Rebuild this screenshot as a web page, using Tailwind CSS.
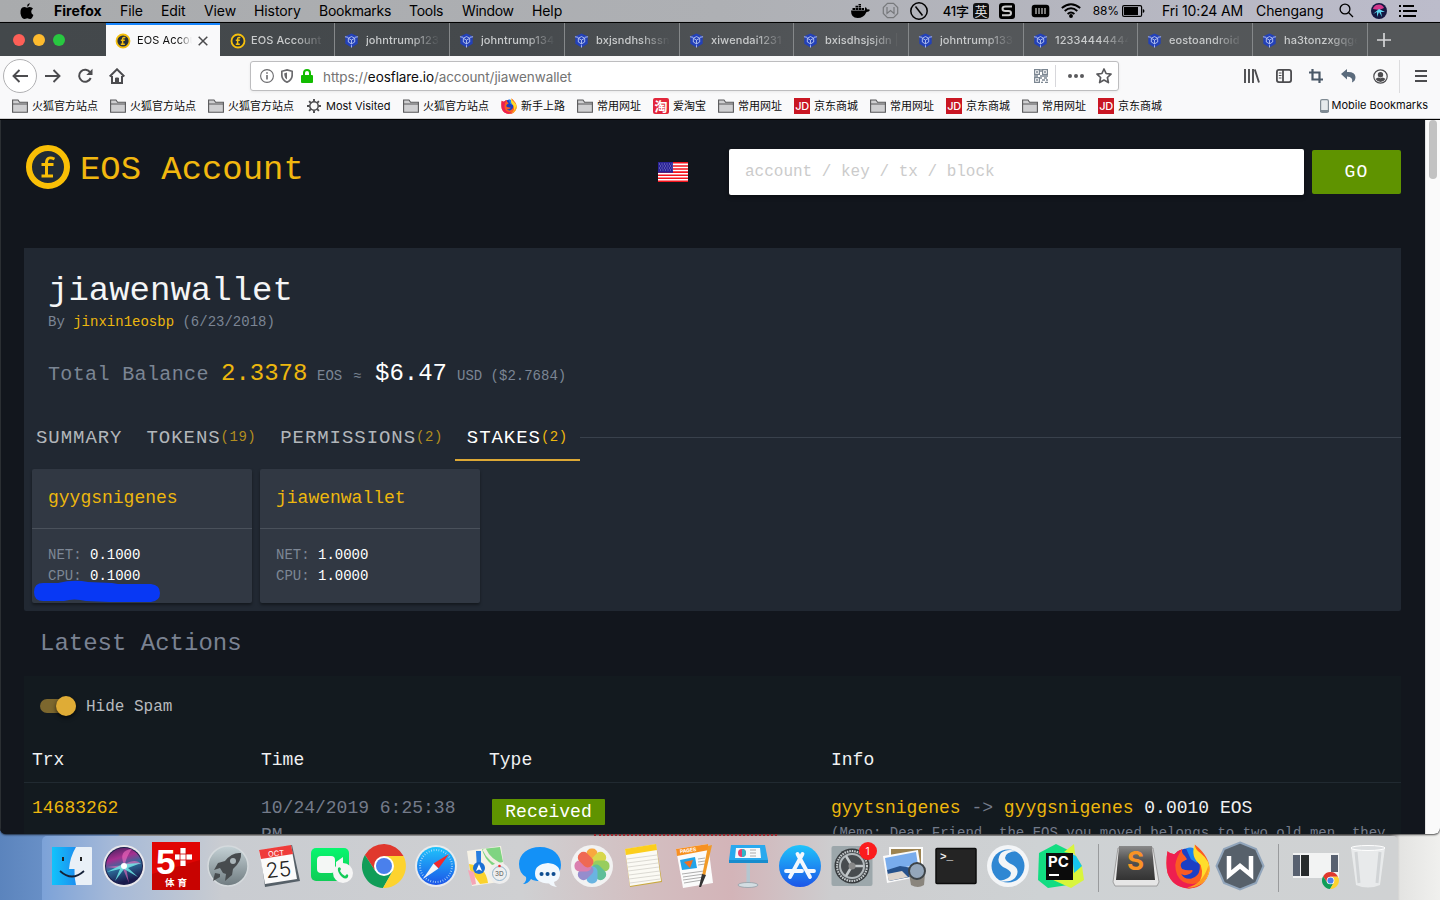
<!DOCTYPE html>
<html lang="en">
<head>
<meta charset="utf-8">
<title>EOS Account</title>
<script src="https://cdn.jsdelivr.net/npm/@tailwindcss/browser@4"></script>
</head>
<body class="w-[1440px] h-[900px] overflow-hidden relative bg-[linear-gradient(90deg,#5b84bd_0,#7fa3d6_118px,#a9a9a9_120px,#a9a9a9_594px,#9a9a9a_780px,#8d8d8d_1390px,#e4e4e2_1400px,#f0f0ee_1440px)] font-['Inter','Noto_Sans_CJK_SC',sans-serif] text-black">

<svg width="0" height="0" class="absolute">
  <defs>
    <symbol id="cube" viewBox="0 0 16 16"><path d="M8 .5 14.6 3.5V11.5L8 15.5 1.4 11.5V3.5Z" fill="#2341b8"/><path d="M1 4 4.5 4.6M15 4 11.5 4.6M8 13V15.5M8 3.8 11.4 5.6V9.6L8 11.6 4.6 9.6V5.6ZM4.6 5.6 8 7.6 11.4 5.6M8 7.6V11.6" fill="none" stroke="#c3cdf5" stroke-width=".9"/></symbol>
    <symbol id="flare" viewBox="0 0 16 16"><circle cx="8" cy="8" r="6.5" fill="#27303a" stroke="#f5bf0d" stroke-width="1.8"/><path d="M10.3 4.8C8.6 4 7.6 4.8 7.6 6.2V11.2M5.8 7.3H9.8M5.8 11.2H9.8" fill="none" stroke="#f5bf0d" stroke-width="1.5"/></symbol>
    <symbol id="folder" viewBox="0 0 16 14"><path d="M.6 13.200V1H6L7.600 3.200H15.400V13.200Z" fill="#cfcfd1" stroke="#58585a" stroke-width="1.100"/><path d="M.6 5H15.400" stroke="#58585a" stroke-width="1"/></symbol>
    <symbol id="chrome" viewBox="0 0 44 44"><path d="M22 12H41.500A22 22 0 0 0 2.900 11L13.300 27Z" fill="#e0382d"/><path d="M13.300 27 2.900 11A22 22 0 0 0 21 44L30.700 27Z" fill="#109d58"/><path d="M30.700 27 21 44A22 22 0 0 0 41.500 12H22Z" fill="#fdd32f"/><circle cx="22" cy="22" r="10" fill="#fff"/><circle cx="22" cy="22" r="8" fill="#4a80ec"/></symbol>
    <symbol id="fox" viewBox="0 0 46 46"><circle cx="23" cy="23" r="18" fill="#1c3fc4"/><path d="M21 5Q29 2 33 10L32 20 26 16Z" fill="#1b84ee"/><path d="M2 8Q5 11 9 11 13 7 17 6 16 10 20 13L22 16 17 19Q14 22 17 26 22 28 27 27 29 28 25 31 19 34 16 31 19 37 26 36 34 34 35 26 36 20 31 16L30 1Q46 14 45 28 41 45 24 46 7 45 2 30 0 20 2 8Z" fill="#fb5b23"/><path d="M2 8Q0 20 2 30 7 45 24 46 34 45 40 38 28 44 18 39 10 34 10 22 11 14 17 6 13 7 9 11 5 11 2 8Z" fill="#ee1f50"/><path d="M30 1Q30 6 36 10 46 18 45 28 42 40 32 43 40 34 36 22 25 14 30 1Z" fill="#ffdd2c"/><path d="M44 22Q46 32 38 40 30 46 22 45 38 42 44 22Z" fill="#fd9a22"/></symbol>
    <linearGradient id="gFinder"><stop offset="0" stop-color="#12c3fb"/><stop offset="1" stop-color="#1c8ff0"/></linearGradient>
    <linearGradient id="gBlue" x2="0" y2="1"><stop offset="0" stop-color="#1fc4fb"/><stop offset="1" stop-color="#1c55e8"/></linearGradient>
    <linearGradient id="gGrey" x2="0" y2="1"><stop offset="0" stop-color="#c5d2d6"/><stop offset="1" stop-color="#6f7b80"/></linearGradient>
    <linearGradient id="gGreen" x2="0" y2="1"><stop offset="0" stop-color="#07f66e"/><stop offset="1" stop-color="#10cc57"/></linearGradient>
    <linearGradient id="gDark" x2="0" y2="1"><stop offset="0" stop-color="#8a8a8a"/><stop offset=".4" stop-color="#555"/><stop offset="1" stop-color="#333"/></linearGradient>
    <linearGradient id="gSiri" x2=".3" y2="1"><stop offset="0" stop-color="#3b2058"/><stop offset=".35" stop-color="#a52f8f"/><stop offset=".6" stop-color="#2c6f9c"/><stop offset="1" stop-color="#191a4c"/></linearGradient>
  </defs>
</svg>

<!-- menu bar -->
<header class="h-[22px] pb-px flex items-center text-[14px] leading-[20px] tracking-[-0.1px] bg-[linear-gradient(90deg,#a9abad,#aeb0b4_50%,#bcbccb)] whitespace-nowrap">
  <div class="w-[54px] flex justify-center"><svg width="14" height="16" viewBox="0 0 14 16"><path d="M9.6 0Q9.8 2.7 7 3.8 6.8 1.2 9.6 0ZM7 4.7Q8.3 4 9.8 4 11.9 4 13 5.6 11.2 6.8 11.2 8.8 11.3 11 13.4 12 12 15.8 10.2 16 9 16 7.2 15.3 5.500 16 4.200 16 1.500 15.500.5 10.500 0 4.400 4.200 4 5.500 4 7 4.700Z"/></svg></div>
  <b class="w-[66px] font-bold tracking-[0.050px]">Firefox</b><span class="w-[41px]">File</span><span class="w-[43px]">Edit</span><span class="w-[50px]">View</span><span class="w-[65px]">History</span><span class="w-[90px] tracking-[-0.250px]">Bookmarks</span><span class="w-[53px] tracking-[-0.250px]">Tools</span><span class="w-[70px] tracking-[-0.350px]">Window</span><span class="w-[313px]">Help</span>
  <div class="w-[30px] flex justify-center"><svg width="19" height="14" viewBox="0 0 19 14"><path d="M0 6.500H14Q13.500 4 14.600 3 16 4 16 5.500 17.500 5 19 6 18 8 15.500 8 13 14 6.500 14 0 14 0 6.500ZM1.500 4H4V6H1.500ZM4.500 4H7V6H4.500ZM7.500 4H10V6H7.500ZM10.500 4H13V6H10.500ZM4.500 1.700H7V3.600H4.500ZM7.500 1.700H10V3.600H7.500ZM7.500 0H10V1.300H7.500Z"/></svg></div>
  <div class="w-[30px] flex justify-center"><svg width="17" height="17" viewBox="0 0 17 17" fill="none" stroke="#77797c" stroke-width="1.200"><path d="M5.500 1.300H11.500L15.700 5.500V11.500L11.500 15.700H5.500L1.300 11.500V5.500ZM5 5V11.500L8.500 8.500 12 11.500V5"/></svg></div>
  <div class="w-[28px] flex justify-center"><svg width="18" height="18" viewBox="0 0 18 18" fill="none" stroke="#000" stroke-width="1.500"><circle cx="9" cy="9" r="8.200"/><path d="M5.500 4.500 12.500 13.500"/></svg></div>
  <span class="w-[36px] text-right text-[13px] font-medium">41字</span>
  <div class="w-[24px] flex justify-center"><span class="size-4 rounded-[3px] bg-[#111] text-[#ddd] text-[13px] leading-4 text-center">英</span></div>
  <div class="w-[28px] flex justify-center"><svg width="16" height="16" viewBox="0 0 16 16"><rect width="16" height="16" rx="3"/><path d="M13 3.500H6.500Q3.500 3.500 3.500 5.800 3.500 8 6.500 8H9.500Q12 8 12 10 12 12.300 9.500 12.300H3" fill="none" stroke="#ccc" stroke-width="2"/></svg></div>
  <div class="w-[38px] flex justify-center"><svg width="19" height="14" viewBox="0 0 19 14"><rect x=".7" y=".7" width="17.600" height="12.600" rx="3"/><path d="M5 4V10M8 4V10M11 4V10M14 4V10" stroke="#bbb" stroke-width="1.300"/></svg></div>
  <div class="w-[24px] flex justify-center"><svg width="20" height="15" viewBox="0 0 20 15" fill="none" stroke="#000" stroke-width="1.900"><path d="M.8 5Q10-2.500 19.200 5M3.700 8Q10 2.700 16.300 8M6.600 11Q10 8 13.400 11"/><circle cx="10" cy="13" r="1" /></svg></div>
  <span class="w-[36px] text-right text-[12px]">88%</span>
  <div class="w-[43px] pl-[3px]"><svg width="23" height="12" viewBox="0 0 23 12"><rect x=".6" y=".6" width="19" height="10.800" rx="1.500" fill="none" stroke="#000" stroke-width="1.200"/><path d="M2 2H16V10H2ZM20.800 4Q22.500 4.500 22.500 6T20.800 8Z"/></svg></div>
  <span class="w-[94px] tracking-[-0.150px]">Fri 10:24 AM</span><span class="w-[74px]">Chengang</span>
  <div class="w-[32px] flex justify-center"><svg width="15" height="15" viewBox="0 0 15 15" fill="none" stroke="#000" stroke-width="1.300"><circle cx="6" cy="6" r="4.900"/><path d="M9.500 9.500 14 14"/></svg></div>
  <div class="w-[34px] flex justify-center"><svg width="16" height="16" viewBox="0 0 16 16"><circle cx="8" cy="8" r="8" fill="#151741"/><path d="M8 7 13 5Q11 0 5 2Q2 4 2 6Z" fill="#d4398d"/><path d="M8 6 2 11 6 9 6 14 8 9 11 14 10 9 14 9Z" fill="#5fd6ee"/></svg></div>
  <div class="w-[24px] flex justify-center"><svg width="18" height="12" viewBox="0 0 18 12"><path d="M0 0H2V2H0ZM4 0H15V2H4ZM0 5H2V7H0ZM4 5H18V7H4ZM0 10H2V12H0ZM4 10H17V12H4Z"/></svg></div>
</header>

<!-- browser window -->
<main class="h-[812px] w-[1440px] overflow-hidden rounded-b-[6px] bg-[#10141b] border-t border-black shadow-[0_1px_2px_#000a]">
  <!-- tab strip -->
  <div class="h-[33px] flex bg-[linear-gradient(90deg,#43484b,#45494c_35%,#54575a_60%,#545759)] text-[11px] font-medium text-[#c9cbcc] tracking-[0.1px]">
    <div class="w-[106px] flex gap-2 items-center pl-[13px] pt-px"><i class="size-3 rounded-full bg-[#fd5f57]"></i><i class="size-3 rounded-full bg-[#febb2e]"></i><i class="size-3 rounded-full bg-[#28c840]"></i></div>
    <div class="w-[114px] bg-[#f9f9fa] border-t-2 border-[#1684fb] flex items-center pl-[9px] text-[#111] font-normal"><svg class="shrink-0" width="16" height="16"><use href="#flare"/></svg><span class="ml-[6px] w-[55px] overflow-hidden whitespace-nowrap [mask-image:linear-gradient(90deg,#000_75%,transparent)]">EOS Account</span><svg class="ml-[6px]" width="10" height="10" viewBox="0 0 10 10"><path d="M.7.7 9.300 9.300M9.300.7.7 9.300" stroke="#4a4a4c" stroke-width="1.500"/></svg></div>
    <div class="w-[115px] border-r border-[#85888a] flex items-center pl-[10px] pt-[2px]"><svg class="shrink-0" width="16" height="16"><use href="#flare"/></svg><span class="ml-[5px] w-[74px] overflow-hidden whitespace-nowrap [mask-image:linear-gradient(90deg,#000_60%,transparent)]">EOS Account |</span></div>
    <div class="w-[115px] border-r border-[#85888a] flex items-center pl-[9px] pt-[2px]"><svg class="shrink-0" width="15" height="15"><use href="#cube"/></svg><span class="ml-[7px] w-[74px] overflow-hidden whitespace-nowrap [mask-image:linear-gradient(90deg,#000_60%,transparent)]">johntrump123</span></div>
    <div class="w-[115px] border-r border-[#85888a] flex items-center pl-[9px] pt-[2px]"><svg class="shrink-0" width="15" height="15"><use href="#cube"/></svg><span class="ml-[7px] w-[74px] overflow-hidden whitespace-nowrap [mask-image:linear-gradient(90deg,#000_60%,transparent)]">johntrump134</span></div>
    <div class="w-[115px] border-r border-[#85888a] flex items-center pl-[9px] pt-[2px]"><svg class="shrink-0" width="15" height="15"><use href="#cube"/></svg><span class="ml-[7px] w-[74px] overflow-hidden whitespace-nowrap [mask-image:linear-gradient(90deg,#000_60%,transparent)]">bxjsndhshssn</span></div>
    <div class="w-[114px] border-r border-[#85888a] flex items-center pl-[9px] pt-[2px]"><svg class="shrink-0" width="15" height="15"><use href="#cube"/></svg><span class="ml-[7px] w-[74px] overflow-hidden whitespace-nowrap [mask-image:linear-gradient(90deg,#000_60%,transparent)]">xiwendai1231</span></div>
    <div class="w-[115px] border-r border-[#85888a] flex items-center pl-[9px] pt-[2px]"><svg class="shrink-0" width="15" height="15"><use href="#cube"/></svg><span class="ml-[7px] w-[74px] overflow-hidden whitespace-nowrap [mask-image:linear-gradient(90deg,#000_60%,transparent)]">bxisdhsjsjdn |</span></div>
    <div class="w-[115px] border-r border-[#85888a] flex items-center pl-[9px] pt-[2px]"><svg class="shrink-0" width="15" height="15"><use href="#cube"/></svg><span class="ml-[7px] w-[74px] overflow-hidden whitespace-nowrap [mask-image:linear-gradient(90deg,#000_60%,transparent)]">johntrump133</span></div>
    <div class="w-[114px] border-r border-[#85888a] flex items-center pl-[9px] pt-[2px]"><svg class="shrink-0" width="15" height="15"><use href="#cube"/></svg><span class="ml-[7px] w-[74px] overflow-hidden whitespace-nowrap [mask-image:linear-gradient(90deg,#000_60%,transparent)]">123344444444</span></div>
    <div class="w-[115px] border-r border-[#85888a] flex items-center pl-[9px] pt-[2px]"><svg class="shrink-0" width="15" height="15"><use href="#cube"/></svg><span class="ml-[7px] w-[74px] overflow-hidden whitespace-nowrap [mask-image:linear-gradient(90deg,#000_60%,transparent)]">eostoandroid</span></div>
    <div class="w-[115px] border-r border-[#85888a] flex items-center pl-[9px] pt-[2px]"><svg class="shrink-0" width="15" height="15"><use href="#cube"/></svg><span class="ml-[7px] w-[74px] overflow-hidden whitespace-nowrap [mask-image:linear-gradient(90deg,#000_60%,transparent)]">ha3tonzxgqge</span></div>
    <div class="flex items-center pl-[9px]"><svg width="14" height="14" viewBox="0 0 14 14"><path d="M7 0V14M0 7H14" stroke="#d5d6d7" stroke-width="1.700"/></svg></div>
  </div>

  <!-- navigation bar -->
  <div class="h-[40px] flex items-center bg-[#f9f9fa]">
    <div class="ml-[3px] size-[34px] rounded-full border border-[#b1b1b3] bg-white flex items-center justify-center"><svg width="16" height="14" viewBox="0 0 16 14" fill="none" stroke="#4c4c4f" stroke-width="1.900"><path d="M16 7H1.500M7.500 1 1.500 7 7.500 13"/></svg></div>
    <div class="w-[32px] flex justify-center"><svg width="16" height="14" viewBox="0 0 16 14" fill="none" stroke="#4c4c4f" stroke-width="1.900"><path d="M0 7H14.500M8.500 1 14.500 7 8.500 13"/></svg></div>
    <div class="w-[32px] flex justify-center"><svg width="16" height="16" viewBox="0 0 16 16"><path d="M13.200 4.500A6 6 0 1 0 13.700 10" fill="none" stroke="#4c4c4f" stroke-width="2"/><path d="M15.500.8V7H9.300Z" fill="#4c4c4f"/></svg></div>
    <div class="w-[32px] flex justify-center"><svg width="16" height="16" viewBox="0 0 16 16" fill="none" stroke="#4c4c4f" stroke-width="2"><path d="M.7 8.500 8 1.300 15.300 8.500M3 8V15H13V8"/><path d="M6.500 15V10H9.500V15Z" fill="#4c4c4f" stroke-width="1"/></svg></div>
    <div class="ml-[117px] w-[869px] h-[30px] rounded-[3px] border border-[#bdbdbf] bg-white flex items-center shadow-[0_1px_3px_#0001]">
      <svg class="ml-[9px] shrink-0" width="14" height="14" viewBox="0 0 14 14" fill="none" stroke="#6b6b6e"><circle cx="7" cy="7" r="6.400" stroke-width="1.100"/><path d="M7 6V10.500M7 3.300V4.800" stroke-width="1.600"/></svg>
      <svg class="ml-[7px] shrink-0" width="12" height="14" viewBox="0 0 12 14"><path d="M6 .9 11.200 2.300V6Q11.200 10.800 6 13.200.8 10.800.8 6V2.300Z" fill="none" stroke="#6b6b6e" stroke-width="1.700"/><path d="M6 3.500V10.500Q3.500 9 3.300 6V4.200Z" fill="#6b6b6e"/></svg>
      <svg class="ml-[8px] shrink-0" width="12" height="14" viewBox="0 0 12 14"><rect y="6" width="12" height="8" rx="1" fill="#12bc00"/><path d="M3 7V4Q3 1 6 1T9 4V7" fill="none" stroke="#12bc00" stroke-width="2"/></svg>
      <div class="ml-[10px] pt-[2px] w-[710px] shrink-0 text-[13.500px] tracking-[-0.080px] text-[#737373]">https://<span class="text-[#0c0c0d]">eosflare.io</span>/account/jiawenwallet</div>
      <svg class="ml-px shrink-0" width="14" height="14" viewBox="0 0 14 14" fill="none" stroke="#7c8792" stroke-width="1.200"><path d="M.6.6H5.400V5.400H.6ZM8.600.6H13.400V5.400H8.600ZM.6 8.600H5.400V13.400H.6Z"/><path d="M2 3H4M10 3H12M2 11H4M7 0V3M6 7H14M0 7H4M7 8V10M8 11H11M7 13.500H9M10 9H13M13 10V12M11 13.500H14" stroke-width="1.500"/></svg>
      <i class="ml-[7px] w-px h-[22px] bg-[#d7d7db]"></i>
      <svg class="ml-[12px] shrink-0" width="16" height="4" viewBox="0 0 16 4" fill="#5a5a5d"><circle cx="2" cy="2" r="2"/><circle cx="8" cy="2" r="2"/><circle cx="14" cy="2" r="2"/></svg>
      <svg class="ml-[12px] shrink-0" width="16" height="16" viewBox="0 0 16 16" fill="none" stroke="#5a5a5d" stroke-width="1.700" stroke-linejoin="round"><path d="M8 1 10.100 5.500 15 6.100 11.400 9.500 12.400 14.600 8 12.100 3.600 14.600 4.600 9.500 1 6.100 5.900 5.500Z"/></svg>
    </div>
    <div class="ml-[117px] w-[32px] flex justify-center"><svg width="16" height="14" viewBox="0 0 16 14" stroke="#4c4c4f" stroke-width="1.900"><path d="M1 0V14M5 0V14M9 0V14M10.800.5 15 13.500"/></svg></div>
    <div class="w-[32px] flex justify-center"><svg width="16" height="14" viewBox="0 0 16 14" fill="none" stroke="#4c4c4f" stroke-width="1.800"><rect x=".9" y=".9" width="14.200" height="12.200" rx="2"/><path d="M7 1V13"/><path d="M2.800 4H5.500M2.800 6.500H5.500M2.800 9H5.500" stroke-width="1"/></svg></div>
    <div class="w-[32px] flex justify-center"><svg width="14" height="14" viewBox="0 0 14 14" fill="none" stroke="#4b5968" stroke-width="2.200"><path d="M3.500 0V10.500H14M0 3.500H10.500V14"/></svg></div>
    <div class="w-[32px] flex justify-center"><svg width="15" height="14" viewBox="0 0 15 14" fill="#5b6b7c"><path d="M0 5 6 0V3Q14 2.500 14.500 8 14.500 12 11 13.500 12.500 8 6 7.500V10.500Z"/></svg></div>
    <div class="w-[32px] flex justify-center"><svg width="15" height="15" viewBox="0 0 15 15"><circle cx="7.500" cy="7.500" r="6.700" fill="none" stroke="#4c4c4f" stroke-width="1.200"/><circle cx="7.500" cy="5.700" r="2.700" fill="#4c4c4f"/><path d="M2.500 10Q4 8.500 5.500 8.500 7.500 10 9.500 8.500 11 8.500 12.500 10 10.500 13 7.500 13T2.500 10Z" fill="#4c4c4f"/></svg></div>
    <i class="ml-[3px] w-px h-[33px] bg-[#dcdcde]"></i>
    <svg class="ml-[15px]" width="12" height="12" viewBox="0 0 12 12" stroke="#4c4c4f" stroke-width="2"><path d="M0 1H12M0 6H12M0 11H12"/></svg>
  </div>

  <!-- bookmarks bar -->
  <div class="h-[23px] flex items-center bg-[#f9f9fa] border-b border-[#cfcfd1] pl-[12px] pb-[2px] text-[11px] text-[#0c0c0d] whitespace-nowrap">
    <div class="w-[98px] flex items-center gap-1"><svg width="16" height="14"><use href="#folder"/></svg>火狐官方站点</div>
    <div class="w-[98px] flex items-center gap-1"><svg width="16" height="14"><use href="#folder"/></svg>火狐官方站点</div>
    <div class="w-[98px] flex items-center gap-1"><svg width="16" height="14"><use href="#folder"/></svg>火狐官方站点</div>
    <div class="w-[97px] flex items-center gap-1"><svg width="16" height="16" viewBox="0 0 16 16" fill="none" stroke="#4c4c4f"><circle cx="8" cy="8" r="4.200" stroke-width="1.500"/><path d="M8 1V3.500M8 12.500V15M1 8H3.500M12.500 8H15M3.100 3.100 4.800 4.800M11.200 11.200 12.900 12.900M12.900 3.100 11.200 4.800M4.800 11.200 3.100 12.900" stroke-width="1.900"/></svg>Most Visited</div>
    <div class="w-[98px] flex items-center gap-1"><svg width="16" height="14"><use href="#folder"/></svg>火狐官方站点</div>
    <div class="w-[76px] flex items-center gap-1"><svg width="16" height="16"><use href="#fox"/></svg>新手上路</div>
    <div class="w-[76px] flex items-center gap-1"><svg width="16" height="14"><use href="#folder"/></svg>常用网址</div>
    <div class="w-[65px] flex items-center gap-1"><span class="size-4 rounded-[2px] bg-[#e2263b] text-white text-[13px] leading-4 text-center font-bold">淘</span>爱淘宝</div>
    <div class="w-[76px] flex items-center gap-1"><svg width="16" height="14"><use href="#folder"/></svg>常用网址</div>
    <div class="w-[76px] flex items-center gap-1"><span class="size-4 bg-[#c91623] text-white text-[11px] leading-4 text-center tracking-[-0.500px] font-medium">JD</span>京东商城</div>
    <div class="w-[76px] flex items-center gap-1"><svg width="16" height="14"><use href="#folder"/></svg>常用网址</div>
    <div class="w-[76px] flex items-center gap-1"><span class="size-4 bg-[#c91623] text-white text-[11px] leading-4 text-center tracking-[-0.500px] font-medium">JD</span>京东商城</div>
    <div class="w-[76px] flex items-center gap-1"><svg width="16" height="14"><use href="#folder"/></svg>常用网址</div>
    <div class="w-[76px] flex items-center gap-1"><span class="size-4 bg-[#c91623] text-white text-[11px] leading-4 text-center tracking-[-0.500px] font-medium">JD</span>京东商城</div>
    <div class="ml-auto mr-[12px] mt-[-1px] flex items-center gap-[3px]"><svg width="9" height="14" viewBox="0 0 9 14"><rect x=".6" y=".6" width="7.800" height="12.800" rx="1.500" fill="#e6eaec" stroke="#808b93" stroke-width="1.200"/><path d="M0 11H9V13H0Z" fill="#808b93"/></svg>Mobile Bookmarks</div>
  </div>

  <!-- page -->
  <div class="h-[715px] flex border-t border-black">
    <div class="w-[1425px] h-full overflow-hidden border-l border-[#2b2f33] bg-[#12161d] pl-[23px] pr-6 font-['Liberation_Mono',monospace]">
      <div class="h-[128px] flex pt-[25px]">
        <svg class="ml-[2px]" width="44" height="44" viewBox="0 0 44 44"><circle cx="22" cy="22" r="19" fill="#212b35" stroke="#f9bf06" stroke-width="6"/><path d="M28.500 14Q20.500 10.500 20.500 18V31M15.500 19.500H27.500M15.500 31H27" fill="none" stroke="#f9bf06" stroke-width="3"/></svg>
        <h1 class="ml-[10px] w-[578px] text-[33.900px] leading-[50px] text-[#f2b80f]">EOS Account</h1>
        <svg class="mt-[17px]" width="30" height="20" viewBox="0 0 30 20"><path d="M0 0H30V20H0Z" fill="#fff"/><path d="M0 .8H30M0 3.900H30M0 7H30M0 10.100H30M0 13.200H30M0 16.300H30M0 19.300H30" stroke="#f5131c" stroke-width="1.550"/><path d="M0 0H15V10.800H0Z" fill="#2a2396"/><path d="M1 2H15M2 4H15M1 6H15M2 8H15" stroke="#8f8bd0" stroke-width="1" stroke-dasharray="1 1.500"/></svg>
        <div class="ml-[41px] mt-1 w-[575px] h-[46px] rounded-[2px] bg-white px-4 text-[16px] leading-[46px] text-[#cbcbcb] shadow-[0_2px_4px_#0006]">account / key / tx / block</div>
        <div class="ml-2 mt-[5px] w-[89px] h-[44px] rounded-[2px] bg-[#5f9300] text-center text-[18px] leading-[44px] tracking-[1.200px] text-white">GO</div>
      </div>
      <section class="h-[363px] bg-[#212832] rounded-b-[2px]">
        <h2 class="pl-6 pt-[21px] text-[34px] leading-[44px] text-[#f4f5f6]">jiawenwallet</h2>
        <p class="pl-6 mt-[-1px] text-[14px] leading-[20px] text-[#7b8594]">By <span class="text-[#edb70e]">jinxin1eosbp</span> (6/23/2018)</p>
        <p class="pl-6 mt-[23px] h-[38px] flex items-baseline leading-[38px] text-[14px] text-[#7b8594]"><span class="w-[173px] text-[20px] tracking-[0.370px]">Total Balance</span><span class="w-[96px] text-[24px] text-[#edb70e]">2.3378</span><span class="w-[36px]">EOS</span><span class="w-[22px]">≈</span><span class="w-[82px] text-[24px] text-[#fff]">$6.47</span><span>USD ($2.7684)</span></p>
        <nav class="mt-[19px] h-[49px] flex text-[19px] tracking-[0.950px] text-[#b2b6ba]">
          <div class="px-3 leading-[52px]">SUMMARY</div>
          <div class="px-3 leading-[52px] flex">TOKENS<span class="text-[14px] leading-[50px] tracking-[0.500px] text-[#b28e1f]">(19)</span></div>
          <div class="px-3 leading-[52px] flex">PERMISSIONS<span class="text-[14px] leading-[50px] tracking-[0.500px] text-[#b28e1f]">(2)</span></div>
          <div class="pl-3 w-[125px] leading-[52px] flex text-white border-b-2 border-[#dda835]">STAKES<span class="text-[14px] leading-[50px] tracking-[0.500px] text-[#edb70e]">(2)</span></div>
          <div class="flex-1 mt-[25px] h-px bg-[#39414c]"></div>
        </nav>
        <div class="pl-2 pt-2 flex gap-2 text-[14px] leading-[21px] text-[#7d8795]">
          <div class="relative w-[220px] h-[134px] rounded-[2px] bg-[#313843] shadow-[0_2px_3px_#0006]">
            <div class="h-[60px] border-b border-[#4a515b] pl-4 text-[18px] leading-[58px] text-[#edb70e]">gyygsnigenes</div>
            <div class="pl-4 pt-[16px]"><p>NET: <span class="text-white">0.1000</span></p><p>CPU: <span class="text-white">0.1000</span></p></div>
            <svg class="absolute left-[2px] top-[111px]" width="127" height="23" viewBox="0 0 127 23"><path d="M9 3H24Q40-1 54 2L78 3 84 4H117Q126 5 126 13T117 22H76L52 21Q40 18 30 21H9Q0 21 0 12T9 3Z" fill="#0838f4"/></svg>
          </div>
          <div class="w-[220px] h-[134px] rounded-[2px] bg-[#313843] shadow-[0_2px_3px_#0006]">
            <div class="h-[60px] border-b border-[#4a515b] pl-4 text-[18px] leading-[58px] text-[#edb70e]">jiawenwallet</div>
            <div class="pl-4 pt-[16px]"><p>NET: <span class="text-white">1.0000</span></p><p>CPU: <span class="text-white">1.0000</span></p></div>
          </div>
        </div>
      </section>
      <h3 class="h-[65px] pl-4 text-[24px] leading-[66px] text-[#7a8292]">Latest Actions</h3>
      <section class="h-[170px] bg-[#131a1f] text-[18px] text-[#f0f1f2]">
        <div class="h-[60px] pl-4 flex items-center text-[16px] text-[#b8bbbe]">
          <div class="w-[36px] h-[14px] rounded-full bg-[#7c672e] flex items-center justify-end"><i class="shrink-0 size-5 rounded-full bg-[#dfac36] shadow-[0_2px_4px_#000a]"></i></div><span class="ml-[10px] pt-px">Hide Spam</span>
        </div>
        <div class="h-[47px] flex border-b border-[#212a31] pl-2 leading-[48px]"><span class="w-[229px]">Trx</span><span class="w-[228px]">Time</span><span class="w-[342px]">Type</span><span>Info</span></div>
        <div class="flex pl-2 pt-[12px] leading-[27px]">
          <div class="w-[229px] text-[#edb70e]">14683262</div>
          <div class="w-[231px] pr-8 text-[#747b8a]">10/24/2019 6:25:38 PM</div>
          <div class="w-[339px] pt-1"><span class="block w-[113px] h-[26px] rounded-[1px] bg-[#5f9300] text-center leading-[26px] text-white">Received</span></div>
          <div class="whitespace-nowrap"><span class="text-[#edb70e]">gyytsnigenes</span> <span class="text-[#747b8a]">-&gt;</span> <span class="text-[#edb70e]">gyygsnigenes</span> 0.0010 EOS<p class="text-[14px] leading-[22px] text-[#747b8a]">(Memo: Dear Friend, the EOS you moved belongs to two old men, they</p></div>
        </div>
      </section>
    </div>
    <div class="w-[15px] bg-[#fafafa] border-l border-[#e4e4e4] flex justify-center"><i class="w-[8px] h-[59px] rounded-full bg-[#c2c2c2]"></i></div>
  </div>
</main>

<!-- strip of desktop between window and dock -->
<div class="h-[3px] flex"><i class="ml-[594px] w-[183px] border-t-2 border-dotted border-[#a0282f]"></i></div>

<!-- dock -->
<footer class="absolute left-[42px] top-[836px] w-[1356px] h-[64px] rounded-t-[5px] px-1 pt-1 flex bg-[linear-gradient(90deg,#7ca2d8_0,#a5b9d8_70px,#c9ccd1_180px,#cfd0d2_480px,#d3bfc1_600px,#d3b4b8_690px,#cdcdcf_790px,#ced2d4_1000px,#d0d2d3_1356px)]">
  <svg class="flex-1" height="52" viewBox="0 0 52 52"><rect x="6" y="7" width="40" height="38" rx="1" fill="#e9f0f7"/><path d="M6 7H30Q24 17 23 29H28.500Q28 37 30 45H6Z" fill="url(#gFinder)"/><path d="M17 17V21M35 17V21" stroke="#222" stroke-width="2"/><path d="M14 31Q26 42 38 31" fill="none" stroke="#152238" stroke-width="1.700"/></svg>
  <svg class="flex-1" height="52" viewBox="0 0 52 52"><circle cx="26" cy="26" r="21" fill="#e8e8ec"/><circle cx="26" cy="26" r="19" fill="#1a1c4a"/><circle cx="26" cy="26" r="18" fill="url(#gSiri)"/><path d="M26 25Q20 10 34 9 29 15 27 24 38 18 43 24 34 24 28 28L31 43 25 29 9 27Z" fill="#f56dc0" opacity=".6"/><path d="M9 32 25 24 43 23 30 28 40 37 26 29 17 41 22 29Z" fill="#6fe9e6" opacity=".85"/><circle cx="26" cy="26" r="3" fill="#fff"/></svg>
  <svg class="flex-1" height="52" viewBox="0 0 52 52"><path d="M2 2H50V50H2Z" fill="#e10503"/><path d="M2 34 50 20V50H2Z" fill="#b80200" opacity=".6"/><text x="6" y="33.500" font-family="Liberation Sans" font-weight="700" font-size="35" fill="#fff">5</text><path d="M30 8H36V14H42V20H36V26H30V20H25V14H30Z" fill="#fff"/><path d="M25 14H42M30 8V26M36 8V26M25 20H42" stroke="#c00" stroke-width=".8"/><text x="15" y="46" font-family="Noto Sans CJK SC" font-weight="700" font-size="9.500" letter-spacing="3" fill="#fff">体育</text></svg>
  <svg class="flex-1" height="52" viewBox="0 0 52 52"><circle cx="26" cy="26" r="20" fill="url(#gGrey)" stroke="#d5dadd" stroke-width="1.500"/><path d="M39 13Q30 12 23 21L16 23 12 30 18 28 21 33 24 34 23 41 30 35 31 29Q40 21 39 13ZM13 33 18 34 18 37 11 41Z" fill="#474b4e"/><circle cx="31" cy="21" r="3" fill="#aab5b9"/></svg>
  <svg class="flex-1" height="52" viewBox="0 0 52 52"><path d="M6 10 38 5 46 41 11 47Z" fill="#566068"/><path d="M5 10 37 5 43 39 11 44Z" fill="#fbfbfb"/><path d="M5 10 37 5 39 14 7 19Z" fill="#ef3c3a"/><text x="14" y="16" transform="rotate(-5 22 14)" font-family="Inter" font-size="7.500" fill="#fff">OCT</text><text x="12" y="37" transform="rotate(-6 24 32)" font-family="Inter" font-weight="300" font-size="21" fill="#222">25</text></svg>
  <svg class="flex-1" height="52" viewBox="0 0 52 52"><rect x="5" y="8" width="38" height="33" rx="5" fill="url(#gGreen)"/><rect x="11" y="16" width="18" height="17" rx="4" fill="#f4f7f5"/><path d="M30 22 37 17V33L30 28Z" fill="#f4f7f5"/><circle cx="37" cy="33" r="10" fill="#f5f5f5"/><path d="M32 28Q34 26 35 29L34 31Q36 35 39 36L41 34Q43 35 42 37 40 40 36 37 31 32 32 28Z" fill="#12cb58"/></svg>
  <svg class="flex-1" height="52" viewBox="0 0 52 52"><use href="#chrome" x="4" y="4" width="44" height="44"/></svg>
  <svg class="flex-1" height="52" viewBox="0 0 52 52"><circle cx="26" cy="26" r="21" fill="#e9ebed"/><circle cx="26" cy="26" r="19" fill="url(#gBlue)"/><circle cx="26" cy="26" r="16" fill="none" stroke="#b7dcfa" stroke-width="2" stroke-dasharray=".7 1.800"/><path d="M39 14 28.500 28.500 23.500 23.500Z" fill="#f1282b"/><path d="M13 39 28.500 28.500 23.500 23.500Z" fill="#f4f4f4"/></svg>
  <svg class="flex-1" height="52" viewBox="0 0 52 52"><path d="M5 11 39 6 44 41 10 46Z" fill="#f6f2e6"/><path d="M20 9 38 7 41 22 30 25Q22 18 20 9Z" fill="#7fd481"/><path d="M7 24Q24 26 26 43L18 44 8 30Z" fill="#fbd22c"/><path d="M6 30 12 32 14 44 10 45Z" fill="#f5a5b6"/><path d="M14 11H19L19 30H15Z" fill="#2a7fdf"/><path d="M22 9Q28 22 42 26" fill="none" stroke="#f1ede2" stroke-width="3.500"/><circle cx="17" cy="28" r="6" fill="#1b6fd4"/><path d="M17 24 20 31 17 29.500 14 31Z" fill="#fff"/><circle cx="37.500" cy="33.500" r="10.500" fill="#eeeeee"/><circle cx="37.500" cy="33.500" r="7" fill="none" stroke="#8fb3ce"/><text x="33" y="36" font-family="Inter" font-size="6.500" fill="#555">3D</text><circle cx="37.500" cy="26" r="1.300" fill="#e33"/></svg>
  <svg class="flex-1" height="52" viewBox="0 0 52 52"><path d="M26 7C39 7 47 15 47 25S39 41 26 41Q20 41 17 39 14 44 9 44 13 41 12 37 5 33 5 24C5 14 14 7 26 7Z" fill="#1391f7"/><path d="M34 23Q46 24 46 33.500 46 40 40 42 40 45 43 47 37 46 35 43.500 21 43 21 33.500 21 24 34 23Z" fill="#f2f8fd"/><path d="M27.500 34h.1M33.500 34h.1M39.500 34h.1" stroke="#0f4e91" stroke-width="4" stroke-linecap="round"/></svg>
  <svg class="flex-1" height="52" viewBox="0 0 52 52"><circle cx="26" cy="26" r="21" fill="#f2f2f2"/><g opacity=".9"><rect x="20.500" y="8.500" width="11" height="17" rx="5" fill="#f9a12b"/><rect x="20.500" y="8.500" width="11" height="17" rx="5" fill="#d5d53a" transform="rotate(45 26 26)"/><rect x="20.500" y="8.500" width="11" height="17" rx="5" fill="#8fca4e" transform="rotate(90 26 26)"/><rect x="20.500" y="8.500" width="11" height="17" rx="5" fill="#4fb990" transform="rotate(135 26 26)"/><rect x="20.500" y="8.500" width="11" height="17" rx="5" fill="#5caee0" transform="rotate(180 26 26)"/><rect x="20.500" y="8.500" width="11" height="17" rx="5" fill="#8b83c9" transform="rotate(225 26 26)"/><rect x="20.500" y="8.500" width="11" height="17" rx="5" fill="#d873a8" transform="rotate(270 26 26)"/><rect x="20.500" y="8.500" width="11" height="17" rx="5" fill="#ef5b43" transform="rotate(315 26 26)"/></g></svg>
  <svg class="flex-1" height="52" viewBox="0 0 52 52"><path d="M7 9 38 4 44 42 12 47Z" fill="#c9a93d"/><path d="M7 9 38 4 43 41 12 46Z" fill="#fbfaf4"/><path d="M7 9 38 4 39 10 8 15Z" fill="#fcce1c"/><path d="M9 19 39 15M9 23 40 19M10 27 40 23M10 31 41 27M11 35 42 31M11 39 42 35M12 43 42 39" stroke="#d3d1ca" stroke-width=".8"/></svg>
  <svg class="flex-1" height="52" viewBox="0 0 52 52"><path d="M6 9 38 4 43 43 13 48Z" fill="#fbfbfb"/><path d="M6 9 38 4 39 10 7 16Z" fill="#f79021"/><text x="10" y="13" transform="rotate(-8 12 12)" font-family="Inter" font-weight="700" font-size="5" fill="#fff">PAGES</text><path d="M10 20 25 17 27 28 12 30Z" fill="#23a3e8"/><path d="M14 22 23 20 20 28Z" fill="#ef7124"/><path d="M28 19 35 18M28 22 35 21M28 25 35 24M12 34 34 31M13 37 34 34M13 40 34 37M14 43 32 40" stroke="#999" stroke-width=".8"/><path d="M38 6 42 5 35 36 32 36Z" fill="#f19a27"/><path d="M32 34 36 35 31 47 29 47Z" fill="#333"/></svg>
  <svg class="flex-1" height="52" viewBox="0 0 52 52"><path d="M9 5H43L46 20H7Z" fill="#29a9ee"/><path d="M7 20H46V23H7Z" fill="#188ccd"/><path d="M14 8H38L39 18H13Z" fill="#f6f9fb"/><circle cx="20" cy="13" r="4" fill="#e4416e"/><path d="M20 9A4 4 0 0 1 20 17Z" fill="#31b6c9"/><path d="M28 10H34M28 13H34M28 16H34" stroke="#aaa"/><path d="M24.500 23H28V44H24.500Z" fill="#b4c6d0"/><ellipse cx="26" cy="45" rx="10" ry="2.500" fill="#d3dde2" stroke="#8b9ba4" stroke-width=".7"/></svg>
  <svg class="flex-1" height="52" viewBox="0 0 52 52"><circle cx="26" cy="26" r="21" fill="url(#gBlue)"/><path d="M23.500 14 36 37M28.500 14 16 37M12 31H28M33 31H40" stroke="#f4f8fd" stroke-width="3.800" stroke-linecap="round"/></svg>
  <svg class="flex-1 overflow-visible" height="52" viewBox="0 0 52 52"><rect x="5.500" y="6" width="41" height="40" rx="2" fill="#9ca7ab"/><circle cx="26" cy="26" r="17.500" fill="#363a3d"/><circle cx="26" cy="26" r="15" fill="#4d5255" stroke="#c9ced0" stroke-width="2" stroke-dasharray="1.500 1"/><circle cx="26" cy="26" r="12" fill="#484c4f" stroke="#b4babd" stroke-width="2"/><path d="M26 26 37 26M26 26 20 16M26 26 20 36" stroke="#c3c8ca" stroke-width="2.500"/><circle cx="26" cy="26" r="3.500" fill="#888"/><circle cx="42" cy="11" r="9" fill="#fb1c1d"/><text x="39.500" y="14.500" font-family="Inter" font-size="10" fill="#fff">1</text></svg>
  <svg class="flex-1" height="52" viewBox="0 0 52 52"><path d="M11 7H45V35H11Z" fill="#fcfcfc"/><path d="M13 9H43V33H13Z" fill="#9d8350"/><path d="M5 16 40 10 44 36 9 43Z" fill="#fafafa"/><path d="M7 18 38 12 40 25 9 30Z" fill="#79acec"/><path d="M9 30 22 26 41 29 42 35 11 41Z" fill="#27528c"/><path d="M9 34 24 31 30 37 11 41Z" fill="#ddd5cd"/><path d="M31 34Q39 40 47 34L46 45Q40 49 33 45Z" fill="#8a857d"/><circle cx="39" cy="31" r="8" fill="#94a6ba" stroke="#3d4347" stroke-width="2"/></svg>
  <svg class="flex-1" height="52" viewBox="0 0 52 52"><rect x="6" y="8.500" width="40" height="35" rx="1" fill="#242424" stroke="#0c0c0c" stroke-width="1.500"/><text x="10" y="20" font-family="Liberation Mono" font-weight="700" font-size="11" fill="#eee">&gt;_</text></svg>
  <svg class="flex-1" height="52" viewBox="0 0 52 52"><circle cx="26" cy="26" r="21" fill="#f3f5f7"/><circle cx="26" cy="26" r="16.500" fill="#2f87d3"/><path d="M35 11Q23 12 23 18 24 22 31 25 39 30 33 38 28 43 17 41 29 39 29 33 28 30 21 27 13 21 19 13 25 8 35 11Z" fill="#f3f5f7"/></svg>
  <svg class="flex-1" height="52" viewBox="0 0 52 52"><path d="M5 13 22 4 38 12 34 45 14 48 4 40Z" fill="#12dd82"/><path d="M30 12 40 4 41 14ZM41 14 48 26 50 40 37 48 17 39Z" fill="#d9f53c"/><path d="M38 14 42 16 48 26 40 33Z" fill="#16c7ee"/><path d="M12 13H39V40H12Z" fill="#0b0b0b"/><text x="14" y="27" font-family="Inter" font-weight="700" font-size="15" fill="#fff">PC</text><path d="M15 34H25V36H15Z" fill="#fff"/></svg>
  <div class="w-[24px] flex justify-center"><i class="mt-1 w-px h-[48px] bg-[#999b9d]"></i></div>
  <svg width="52" height="52" viewBox="0 0 52 52"><path d="M8 8H43L49 42 47 46H5L3 42Z" fill="#e6e6e6" stroke="#858585" stroke-width=".7"/><path d="M9 6H42L45 40H6Z" fill="url(#gDark)"/><text x="17" y="30" font-family="Inter" font-weight="700" font-size="26" fill="#f99325">S</text></svg>
  <svg width="52" height="52" viewBox="0 0 52 52"><use href="#fox" x="3.500" y="3" width="45" height="46"/></svg>
  <svg width="52" height="52" viewBox="0 0 52 52"><path d="M26 2.500 42 9 49.500 26 42 43 26 49.500 10 43 2.500 26 10 9Z" fill="#57616b" stroke="#91a5bb" stroke-width="2"/><path d="M15 16V35L26 26 37 35V16" fill="none" stroke="#fff" stroke-width="4.500"/></svg>
  <div class="w-[24px] flex justify-center"><i class="mt-1 w-px h-[48px] bg-[#999b9d]"></i></div>
  <svg width="52" height="52" viewBox="0 0 52 52"><path d="M3 13H49V38H3Z" fill="#f2f3f3"/><path d="M3 15H10V36H3ZM41 15H48V32H41Z" fill="#586170"/><path d="M11 15H19V36H11Z" fill="#272b2c"/><use href="#chrome" x="32" y="32" width="17" height="17"/></svg>
  <svg width="52" height="52" viewBox="0 0 52 52"><path d="M9 8 14 45Q26 50 38 45L43 8Z" fill="#eceeef" opacity=".85"/><path d="M14 12 17 43M38 12 35 43" stroke="#d1d4d6" stroke-width="3"/><ellipse cx="26" cy="8" rx="17" ry="2.500" fill="#dadddf" stroke="#fff"/></svg>
</footer>
</body>
</html>
